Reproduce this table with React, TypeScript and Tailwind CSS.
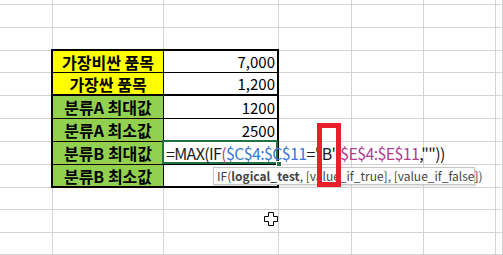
import React from "react";

const COLS = 7;
const ROWS = 12;

const rows = [
  { label: "가장비싼 품목", value: "7,000", bg: "bg-[#ffff00]", line: "border-b border-black" },
  { label: "가장싼 품목", value: "1,200", bg: "bg-[#ffff00]", line: "border-b-2 border-black" },
  { label: "분류A 최대값", value: "1200", bg: "bg-[#92d050]", line: "border-b border-black" },
  { label: "분류A 최소값", value: "2500", bg: "bg-[#92d050]", line: "border-b border-black" },
  { label: "분류B 최대값", value: "", bg: "bg-[#92d050]", line: "border-b border-black", active: true },
  { label: "분류B 최소값", value: "", bg: "bg-[#92d050]", line: "" },
];

const font = { fontFamily: '"Noto Sans CJK KR", "Noto Sans", sans-serif' };

function Formula() {
  return (
    <span className="whitespace-nowrap text-[16px] leading-none tracking-[-0.65px]">
      <span className="text-[#1b1b1b]">=MAX(IF</span>
      <span className="text-[#c0407a]">(</span>
      <span className="text-[#3a78d8]">$C$4:$C$11</span>
      <span className="text-[#1b1b1b]">="B"</span>
      <span className="text-[#b0408f]">,$E$4:$E$11</span>
      <span className="text-[#1b1b1b]">,""))</span>
    </span>
  );
}

export default function App() {
  const cells = [];
  for (let r = 0; r < ROWS; r++) {
    for (let c = 0; c < COLS; c++) {
      const inTable = r >= 3 && r <= 8 && c >= 1 && c <= 2;
      if (inTable) continue;
      cells.push(
        <div
          key={`${r}-${c}`}
          className="border-r border-b border-[#d4d4d4]"
          style={{ gridRow: r + 1, gridColumn: c + 1 }}
        />
      );
    }
  }

  return (
    <div className="relative w-[503px] h-[255px] overflow-hidden bg-white" style={font}>
      <div className="grid grid-cols-[53px_111px_115px_73px_72px_72px_1fr] grid-rows-[5px_23px_23px_22px_23px_23px_23px_23px_23px_22px_23px_22px]">
        {cells}

        {/* table */}
        <div className="col-start-2 col-span-2 row-start-4 row-span-6 -ml-[2px] -mt-[2px] border-2 border-black grid grid-cols-[111px_113px] grid-rows-[22px_23px_23px_23px_23px_21px]">
          {rows.map((row) => (
            <React.Fragment key={row.label}>
              <div
                className={`${row.bg} ${row.line} border-r border-r-black flex items-center justify-center text-[16px] font-bold text-black leading-none`}
              >
                {row.label}
              </div>
              <div
                className={`relative bg-white ${row.line} flex items-center justify-end pr-[2px] text-[15px] text-black leading-none ${row.active ? "z-10" : ""}`}
              >
                {row.value}
                {row.active && (
                  <>
                    <div className="absolute -left-[2px] -top-[2px] w-[116px] h-[24px] border-2 border-[#217346]" />
                    <div className="absolute left-[112px] top-[19px] w-[6px] h-[6px] bg-[#217346] border border-white" />
                    <div className="absolute left-[2px] top-[3px]">
                      <Formula />
                    </div>
                  </>
                )}
              </div>
            </React.Fragment>
          ))}
        </div>
      </div>

      {/* function tooltip */}
      <div className="absolute left-[213px] top-[167px] w-[262px] h-[18px] bg-white border border-[#c6c6c6] shadow-[1px_1px_2px_rgba(0,0,0,0.15)] flex items-center pl-[3px] text-[12px] leading-none text-[#444] whitespace-nowrap z-20">
        IF(<span className="font-bold">logical_test</span>, [value_if_true], [value_if_false])
      </div>

      {/* red highlight box */}
      <div className="absolute left-[317px] top-[123px] w-[24px] h-[64px] border-[5px] border-[#e8202a] z-30" />

      {/* cell cursor */}
      <svg className="absolute left-[263px] top-[212px] z-30" width="16" height="14" viewBox="0 0 16 14">
        <path
          d="M5.5 0.5 H10.5 V4.5 H14.5 V9.5 H10.5 V13.5 H5.5 V9.5 H1.5 V4.5 H5.5 Z"
          fill="#fff"
          stroke="#000"
          strokeWidth="1"
        />
      </svg>
    </div>
  );
}
